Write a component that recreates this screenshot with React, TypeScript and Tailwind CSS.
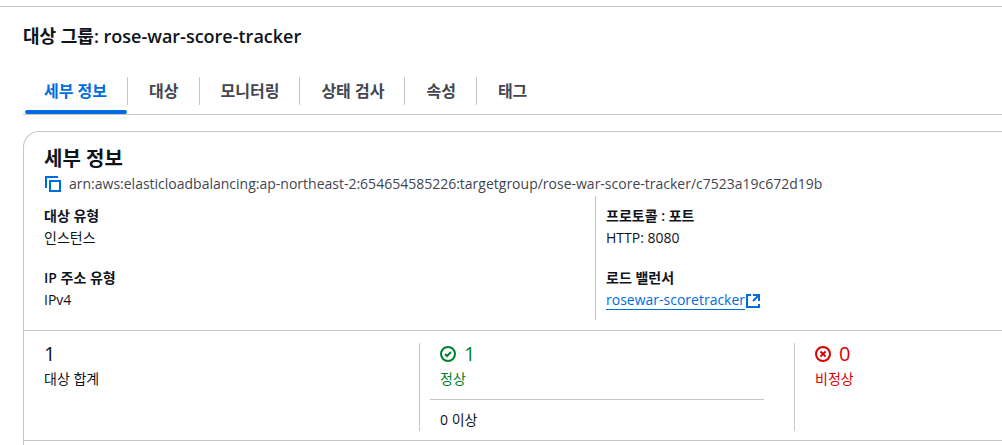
import { useState } from 'react';
import type { ReactNode } from 'react';

const TABS = ['세부 정보', '대상', '모니터링', '상태 검사', '속성', '태그'];

export default function App() {
    const [active, setActive] = useState('세부 정보');

    return (
        <div className="min-h-screen bg-white pt-[6px] text-sm leading-[22px] text-[#0f141a] font-['Open_Sans','Noto_Sans_CJK_KR',sans-serif]">
            <div className="border-t border-[#c6c6cd] pl-[23px] pt-[18px]">
                <h1 className="text-lg font-semibold leading-[22px]">대상 그룹: rose-war-score-tracker</h1>

                {/* Tabs */}
                <div role="tablist" className="mt-[30px] flex border-b border-[#c6c6cd] pl-0.5">
                    {TABS.map((label, i) => (
                        <TabButton
                            key={label}
                            label={label}
                            first={i === 0}
                            last={i === TABS.length - 1}
                            active={active === label}
                            onClick={() => setActive(label)}
                        />
                    ))}
                </div>

                <section className="mt-4 rounded-tl-2xl border-l border-t border-[#c6c6cd] pt-[15px]">
                    {/* Header */}
                    <header className="pl-5">
                        <h2 className="text-xl font-semibold leading-6">세부 정보</h2>
                        <div className="mt-0.5 flex items-center gap-2 text-[#424650]">
                            <button aria-label="ARN 복사" className="text-[#006ce0]">
                                <CopyIcon />
                            </button>
                            <span>arn:aws:elasticloadbalancing:ap-northeast-2:654654585226:targetgroup/rose-war-score-tracker/c7523a19c672d19b</span>
                        </div>
                    </header>

                    <div className="mt-px grid grid-cols-[571fr_407fr] pb-[10px]">
                        <dl className="flex flex-col gap-[18px] py-[9px] pl-5">
                            <Field label="대상 유형">인스턴스</Field>
                            <Field label="IP 주소 유형">IPv4</Field>
                        </dl>
                        <dl className="flex flex-col gap-[18px] border-l border-[#c6c6cd] py-[9px] pl-[10px]">
                            <Field label="프로토콜 : 포트">HTTP: 8080</Field>
                            <Field label="로드 밸런서">
                                <a href="#load-balancer" className="inline-flex items-center text-[#006ce0]">
                                    <span className="border-b border-[#006ce0] leading-[18px]">rosewar-scoretracker</span>
                                    <ExternalIcon />
                                </a>
                            </Field>
                        </dl>
                    </div>

                    {/* Target counts */}
                    <div className="grid grid-cols-[395fr_375fr_208fr] border-y border-[#c6c6cd] pb-[9px] pt-3">
                        <div className="pl-5">
                            <Count value={1} label="대상 합계" />
                        </div>
                        <div className="border-l border-[#c6c6cd] pl-[10px] pr-[30px]">
                            <div className="border-b border-[#c6c6cd] pb-[9px] pl-[10px] text-[#00802f]">
                                <Count value={1} label="정상" icon={<HealthyIcon />} />
                            </div>
                            <p className="pl-[10px] pt-[9px]">0 이상</p>
                        </div>
                        <div className="border-l border-[#c6c6cd] pl-5 text-[#db0000]">
                            <Count value={0} label="비정상" icon={<UnhealthyIcon />} />
                        </div>
                    </div>
                    <div className="h-1" />
                </section>
            </div>
        </div>
    );
}

function TabButton({ label, first, last, active, onClick }: any) {
    return (
        <div className="relative h-[37px]">
            <button
                role="tab"
                aria-selected={active}
                onClick={onClick}
                className={`block h-7 text-base font-semibold leading-7 ${first ? 'pl-[19px]' : 'pl-[21px]'} pr-5 ${last ? '' : 'border-r border-[#c6c6cd]'} ${active ? 'text-[#006ce0]' : 'text-[#424650]'}`}
            >
                {label}
            </button>
            {active && <span className="absolute bottom-0 left-0 right-px h-1 rounded-sm bg-[#006ce0]" />}
        </div>
    );
}

function Field({ label, children }: { label: string; children: ReactNode }) {
    return (
        <div>
            <dt className="font-semibold">{label}</dt>
            <dd className="h-[22px]">{children}</dd>
        </div>
    );
}

function Count({ value, label, icon }: { value: number; label: string; icon?: ReactNode }) {
    return (
        <div className="flex flex-col gap-[3px]">
            <div className="flex items-center gap-2 text-xl leading-[22px]">
                {icon}
                {value}
            </div>
            <div>{label}</div>
        </div>
    );
}

function CopyIcon() {
    return (
        <svg width="17" height="16" viewBox="0 0 17 16" fill="none" stroke="currentColor" strokeWidth="2" className="block">
            <path d="M2 12V1h12" />
            <path d="M6 5h10v10H6z" />
        </svg>
    );
}

function ExternalIcon() {
    return (
        <svg width="16" height="16" viewBox="0 0 16 16" fill="none" stroke="currentColor" strokeWidth="2">
            <path d="M6 2H2v12h12v-3" />
            <path d="M8 2h6v6M14 2 8 8" />
        </svg>
    );
}

function HealthyIcon() {
    return (
        <svg width="16" height="16" viewBox="0 0 16 16" fill="none" stroke="currentColor" strokeWidth="2">
            <circle cx="8" cy="8" r="7" />
            <path d="m5 8 2 2 4-4" />
        </svg>
    );
}

function UnhealthyIcon() {
    return (
        <svg width="16" height="16" viewBox="0 0 16 16" fill="none" stroke="currentColor" strokeWidth="2">
            <circle cx="8" cy="8" r="7" />
            <path d="m5.500 5.500 5 5M10.500 5.500l-5 5" />
        </svg>
    );
}
